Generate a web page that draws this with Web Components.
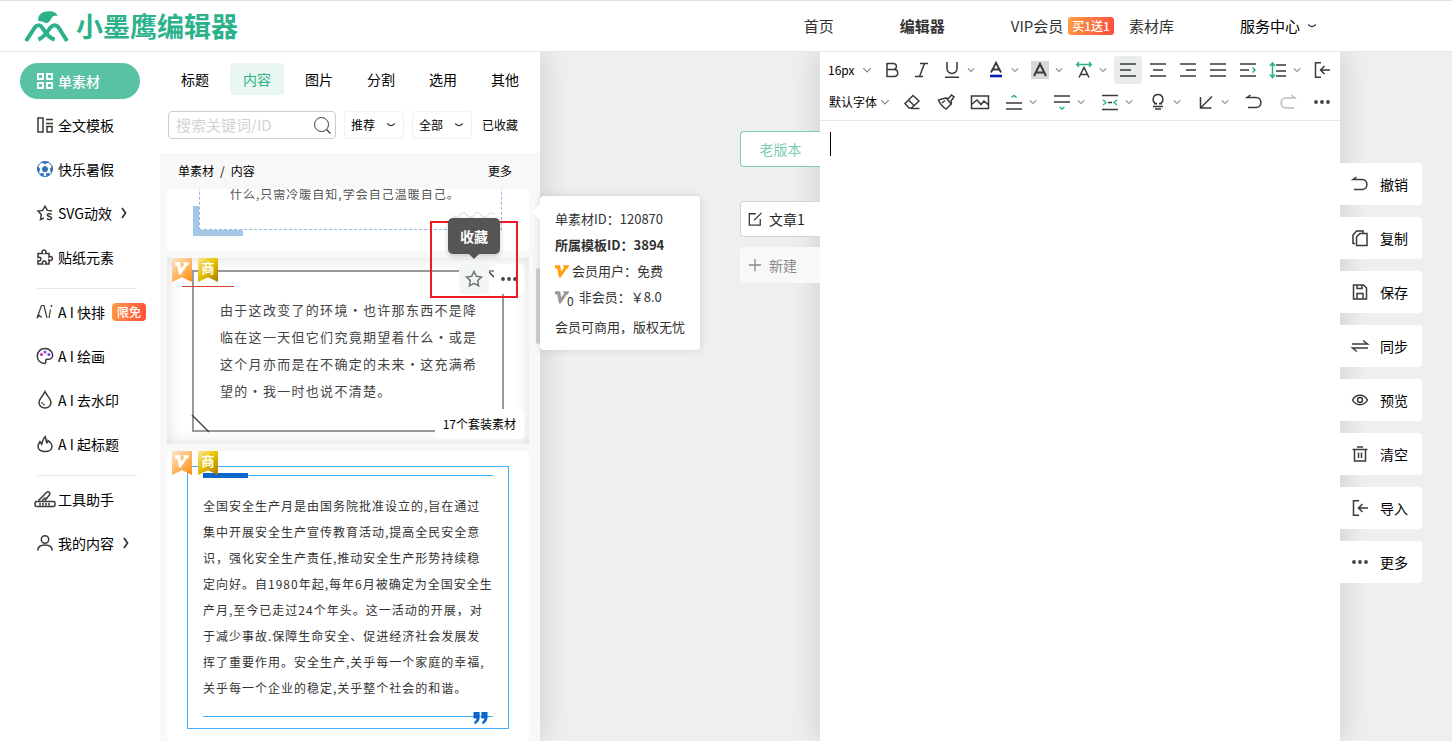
<!DOCTYPE html>
<html lang="zh-CN">
<head>
<meta charset="utf-8">
<title>小墨鹰编辑器</title>
<style>
body{margin:0;font-family:"Noto Sans CJK SC","Noto Sans",sans-serif;font-size:14px;line-height:20px;color:#000;background:#fff}
</style>
</head>
<body>
<ink-app></ink-app>
<script>
const ICONS = {
  grid:'<path d="M1 1h5v5H1zM10 1h5v5h-5zM1 10h5v5H1zM10 10h5v5h-5z" stroke-width="1.800"/>',
  layout:'<path d="M1 1h5v14H1zM9 2.500h7M9 6.500h7M10 9.500h5V15h-5z"/>',
  ball:'<circle cx="8" cy="8" r="7.500" fill="#fff" stroke="#2f6db5" stroke-width="1"/><path d="M8 5l3 2.200-1.200 3.600H6.200L5 7.200zM4.500 1h7L8 3zM.6 5.500L2.800 7.500 2.200 11 .8 9.500zM15.400 5.500l-2.200 2 .6 3.500 1.400-1.500zM4 12l3 1-1 2.300-2.500-1.200zM12 12l-3 1 1 2.300 2.500-1.200z" fill="#2f6db5" stroke="#2f6db5" stroke-width=".6"/>',
  starS:'<path d="M15 6l-4.600-.6L8 1.200 5.600 5.400 1 6l3.300 3.500-.8 5L7 13"/><path d="M14.500 9.300c-1.500-1-4.300-.7-4.200.8.100 1.800 4.300 1 4.300 2.900 0 1.600-3 2-4.600.7"/>',
  puzzle:'<path d="M1 4.500h4.600C4.500 2.800 5.200 1 7 1s2.500 1.800 1.400 3.500H12v3.600c1.700-1.100 3.500-.4 3.500 1.400s-1.800 2.500-3.500 1.400V15H8.600c.9-1.700.2-3-1.400-3S5 13.300 5.800 15H1v-3.400c1.700.8 3-.1 3-1.500S2.700 7.700 1 8.600z"/>',
  ai:'<path d="M0 14L4.500 1.500H7L10 14M1.500 11l3.500 2.500M0 14l3-3M13.500 5.500L12 14" stroke-width="1.200"/><circle cx="14.500" cy="2" r=".9" fill="#333" stroke="none"/>',
  palette:'<path d="M8 15.500C3 15.500.3 12.200.3 8 .3 3.500 3.700.6 8 .6s7.700 3 7.700 6.700c0 3-2.200 4.200-5.200 4-2.300-.1-1.700 1.500-1.700 2.800 0 .8-.2 1.400-.8 1.400z"/><g stroke="none"><circle cx="4.500" cy="6.500" r="1.500" fill="#d6249f"/><circle cx="8" cy="4" r="1.500" fill="#9a3be8"/><circle cx="11.800" cy="6.500" r="1.500" fill="#7c3aed"/></g>',
  drop:'<path d="M8 -.5C6 4 2 7 2 10.700 2 13.600 4.700 16 8 16s6-2.400 6-5.300C14 7 10 4 8 -.5z"/><path d="M5 10c.3 1.800 1.400 2.600 3 2.800" stroke-dasharray="1.500 1"/>',
  fire:'<path d="M8 15.500c-4 0-7-2-7-5.200 0-2.200 1.300-3.300 2-4.600.8 1 1.200 1.900 1.700 2.600C5.700 6.500 5 3 8.300.6c.6 2 .4 4.300 1.700 6.200.7-.5 1-1.300 1-2.300 2 1.500 4 3.500 4 6 0 3-3 5-7 5z"/>',
  knife:'<path d="M1.500 9.500L9.500 1.500c2-1.700 4.500.5 3 2.300L8 9.500M-.5 10.500h17c2 0 2 5 0 5h-17c-2 0-2-5 0-5zM3 12v2.500M6 12v2.500M9 12v2.500M12 12v2.500M5 9.500l3.500-3"/>',
  user:'<circle cx="8" cy="4.500" r="3.700"/><path d="M.8 15.500c0-4 3-5.500 7.200-5.500s7.200 1.500 7.200 5.500"/>',
  search:'<circle cx="7.500" cy="7.500" r="7" stroke-width="1"/><path d="M12.500 12.500l4 4" stroke-width="1.300"/>',
  down:'<path d="M3 6Q8 11.500 13 6"/>',
  tdown:'<path d="M3 5.500l5 5 5-5" stroke="#888" stroke-width="1.800"/>',
  right:'<path d="M5 3l3.500 5L5 13" stroke-width="1.800"/>',
  star:'<path d="M8 .5l2.300 4.700 5.200.8-3.800 3.600.9 5.200L8 12.300l-4.600 2.500.9-5.200L.5 6l5.200-.8z" stroke="#777"/>',
  dots:'<g fill="#444" stroke="none"><circle cx="2" cy="8" r="1.900"/><circle cx="8" cy="8" r="1.900"/><circle cx="14" cy="8" r="1.900"/></g>',
  vip:'<path d="M0 1.500h6l1 7L10.500 4 9 1.500h7L15 5h-1.500L6.500 15.500H4.500L2.500 5H0z" fill="currentColor" stroke="none"/>',
  bold:'<path d="M3 1.500h6c4.500 0 4.500 6 0 6H3zM3 7.500h7c5 0 5 7 0 7H3z"/>',
  italic:'<path d="M6 1.500h8M1 14.500h8M10.500 1.500l-5 13"/>',
  under:'<path d="M3 0v6.500C3 13 13 13 13 6.500V0M1 15.200h14"/>',
  color:'<path d="M3 10.500L8 .8l5 9.700M5 7.500h6" stroke-width="1.800"/><path d="M2 14h12" stroke="#0b22b0" stroke-width="2.600"/>',
  hilite:'<path d="M-1-1h18v18H-1z" fill="#d8d8d8" stroke="none"/><path d="M2 14L8 2l6 12M4 10.500h8" stroke-width="2"/>',
  spacing:'<path d="M3 15.500L8 5.500l5 10M5 12.500h6"/><path d="M3 0L.8 2.500 3 5M13 0l2.200 2.500L13 5M1 2.500h4M11 2.500h4M5 2.500h6" stroke="#2bb28b"/>',
  left:'<path d="M0 2h16M0 8h11M0 14h16"/>',
  center:'<path d="M0 2h16M3 8h10M0 14h16"/>',
  alignR:'<path d="M0 2h16M6 8h10M0 14h16"/>',
  justify:'<path d="M0 2h16M0 8h16M0 14h16"/>',
  indent:'<path d="M0 2h16M0 8h9M0 14h16"/><path d="M12.500 5.500L15 8l-2.500 2.500" stroke="#2bb28b"/>',
  lineh:'<path d="M6 3h10M6 9h10M6 14h10"/><path d="M0 4l2.500-3L5 4M0 12.500l2.500 3 2.500-3M2.500 1v14" stroke="#2bb28b"/>',
  enter:'<path d="M7 .8H1.500v14.400H7M16 8H6.500M10.500 4l-4 4 4 4"/>',
  eraser:'<path d="M5 14L1 9.500l8-8 6 5.500-7.500 7zM4.500 6l5.500 5.500M7 14.500h8.500"/>',
  brush:'<path d="M.5 6l7-2 3 .5 3-3.500L16 3l-3 4 .3 3L8 15C5 13 2 10 .5 6zM4 9l3-2.500M8 4l5.300 6"/>',
  image:'<path d="M-.5 2h17v12.500h-17zM-.5 10.500L5 6l4 4.500L12 7l4.500 4"/>',
  lineUp:'<path d="M0 9h16M0 15h16"/><path d="M5.500 3.500L8 1.500l2.500 2" stroke="#2bb28b"/>',
  lineDown:'<path d="M0 2h16M0 8h16"/><path d="M5.500 13L8 15l2.500-2" stroke="#2bb28b"/>',
  sides:'<path d="M0 1.500h16M0 15.500h16M6 8.500h4"/><path d="M1 6l3 2.500L1 11M15 6l-3 2.500L15 11" stroke="#2bb28b"/>',
  bulb:'<path d="M7 9.800H4M9 9.800h3M7 9.800C1 8.500 2.500.5 8 .5s7 8 1 9.300M3 12.500h10M5 15h6"/>',
  diag:'<path d="M2.500 3v11h11M2.500 14L14 2.500"/>',
  undo:'<path d="M4.500 1L1 3.500h9c6.500 0 6.500 10 0 10H2"/>',
  redo:'<path d="M11.500 1L15 4H6C-.5 4-.5 14 6 14h8" stroke="#bbb"/>',
  copy:'<path d="M3 13.500H1V5l3.500-4H11v2"/><path d="M4.500 7L8 3.500h7v12H4.500z"/>',
  save:'<path d="M1.500 1h10l3 3v11h-13zM5 1v3.500h5V1M5 15V9.500h6V15"/>',
  sync:'<path d="M0 6h15.500L11 2.500M16 10H.5L5 13.500"/>',
  eye:'<path d="M.5 8C4 1.800 12 1.800 15.500 8 12 14.200 4 14.200.5 8z"/><circle cx="8" cy="8" r="2.500"/>',
  trash:'<path d="M.5 3.500h15M5 1h6M2.500 3.500V15h11V3.500M6.500 6.500V12M9.500 6.500V12"/>',
  edit:'<path d="M9 2H1.500v13H14V8M7 9.500L15.500 1"/>',
  plus:'<path d="M8 1v14M1 8h14"/>',
  logo:'<g fill="#2bb28b" stroke="none"><path d="M43 30C40 12 55 0 75 1c14 0 24 6 25 14-8-2-14 0-17 6-3 8-9 13-15 16-8-4-16-7-25-7z"/></g><g stroke="#2bb28b" stroke-width="12" fill="none"><path d="M6 90l26-40c6-9 16-9 22-1 12 17 18 31 38 37"/><path d="M129 90l-25-40c-8-11-18-8-25 0-8 12-18 28-36 36"/></g>',
  quote:'<path d="M0 1h7v6c0 4-2.500 7-6 8v-3c1.500-.8 2.500-2 2.500-3.500H0zM9 1h7v6c0 4-2.500 7-6 8v-3c1.500-.8 2.500-2 2.500-3.500H9z" fill="#0b66cc" stroke="none"/>',
  wave:'<path d="M0 2q3.500 5 7 0t7 0 7 0 7 0 7 0 7 0" stroke="#bfe0d2" stroke-width="1"/>',
  corner:'<path d="M0 0l17 17" stroke="#444"/>'
};
const BOX = {logo:'0 0 135 90', wave:'0 0 44 5', corner:'0 0 17 17'};

function define(name, css, html) {
  const t = document.createElement('template');
  customElements.define(name, class extends HTMLElement {
    constructor() { super(); this.attachShadow({mode:'open'}); }
    connectedCallback() {
      t.innerHTML = '<style>*{box-sizing:border-box}button,select,input,textarea{font:inherit;color:inherit;border:0;background:none;padding:0;margin:0;outline:0}a{color:inherit;text-decoration:none}' + css + '</style>' +
        (typeof html === 'function' ? html(this) : html);
      this.shadowRoot.replaceChildren(t.content.cloneNode(true));
    }
  });
}

define('ink-icon', ':host{display:block;flex:none;width:16px;height:16px}svg{display:block;width:100%;height:100%;overflow:visible}',
  el => { const n = el.getAttribute('name');
    return `<svg viewBox="${BOX[n]||'0 0 16 16'}" fill="none" stroke="${el.hasAttribute('tint')?'currentColor':'#3a3a3a'}" stroke-width="1.500" aria-hidden="true">${ICONS[n]}</svg>`; });

define('ink-badge', ':host{display:block;flex:none;color:#fff;background:linear-gradient(110deg,#ffa044,#ff4a3c);border-radius:3px;height:18px;line-height:18px;font-size:12px;font-weight:500;padding:0 var(--pad,4px)}', '<slot></slot>');

define('ink-header', `
:host{display:flex;align-items:center;justify-content:space-between;height:52px;box-sizing:border-box;border-top:1px solid #e0e0e0;border-bottom:1px solid #e6e6e6;background:#fff;padding:0 134px 0 24px;font-size:15px;line-height:22px;color:#333}
.brand{display:flex;align-items:center;gap:7px;color:#2bb28b;font-size:27px;line-height:36px;font-weight:700}
.brand ink-icon{width:45px;height:30px}
nav{display:flex;align-items:center}
nav a{display:flex;align-items:center;gap:5px;white-space:nowrap}
.a{margin-right:66px}.b{margin-right:66px;font-weight:700}.c{margin-right:15px}.d{margin-right:66px}.e{color:#000}
.e ink-icon{width:12px;height:12px;margin-left:1px}`,
`<a class="brand" href="#"><ink-icon name="logo"></ink-icon><span>小墨鹰编辑器</span></a>
<nav><a class="a" href="#">首页</a><a class="b" href="#">编辑器</a><a class="c" href="#">VIP会员<ink-badge>买1送1</ink-badge></a><a class="d" href="#">素材库</a><a class="e" href="#">服务中心<ink-icon name="down"></ink-icon></a></nav>`);

define('ink-nav-item', `
:host{display:flex;align-items:center;height:44px;padding:0 20px}
a{display:flex;align-items:center;gap:5px;width:120px;height:36px;padding-left:17px;border-radius:18px;white-space:nowrap}
:host([active]) a{background:#5ac2a4;color:#fff;font-weight:500}`,
el => `<a href="#"><ink-icon name="${el.getAttribute('icon')}" ${el.hasAttribute('active')?'tint':''}></ink-icon><slot></slot>${el.hasAttribute('more')?'<ink-icon name="right"></ink-icon>':''}</a>`);

define('ink-nav', `
:host{display:block;flex:none;width:160px;padding-top:7px;box-sizing:border-box;background:#fff}
hr{border:0;height:1px;background:#e4e8e7;margin:9px 23px 1px 37px}
ink-badge{border-radius:4px;margin-left:2px;--pad:5px}`,
`<nav><ink-nav-item active icon="grid">单素材</ink-nav-item><ink-nav-item icon="layout">全文模板</ink-nav-item><ink-nav-item icon="ball">快乐暑假</ink-nav-item><ink-nav-item icon="starS" more>SVG动效</ink-nav-item><ink-nav-item icon="puzzle">贴纸元素</ink-nav-item><hr>
<ink-nav-item icon="ai">A I 快排<ink-badge>限免</ink-badge></ink-nav-item><ink-nav-item icon="palette">A I 绘画</ink-nav-item><ink-nav-item icon="drop">A I 去水印</ink-nav-item><ink-nav-item icon="fire">A I 起标题</ink-nav-item><hr>
<ink-nav-item icon="knife">工具助手</ink-nav-item><ink-nav-item icon="user" more>我的内容</ink-nav-item></nav>`);

define('ink-select', `
:host{display:block;flex:none;position:relative;width:60px;height:28px}
select{appearance:none;width:100%;height:100%}
ink-icon{position:absolute;right:4px;top:50%;margin-top:-6px;width:12px;height:12px;pointer-events:none}
:host([boxed]) ink-icon{right:7px}
:host([boxed]) select{border:1px solid #f1f1f1;border-radius:4px;padding-left:6px}`,
el => `<select aria-label="${el.getAttribute('label')}"><option>${el.getAttribute('value')}</option></select><ink-icon name="${el.hasAttribute('boxed')?'down':'tdown'}"></ink-icon>`);

define('ink-ribbons', `
:host{position:absolute;left:5px;top:0;display:flex;gap:6px;color:#fff}
span{display:flex;justify-content:center;width:20px;height:24px;padding-top:3px;box-sizing:border-box;clip-path:polygon(0 0,100% 0,100% 100%,50% 80%,0 100%);font-size:13px;line-height:14px;font-weight:700}
.v{background:linear-gradient(135deg,#fde6c8,#ff8c0c)}.s{background:linear-gradient(135deg,#fbe69a,#e8c400 45%,#a87800)}
ink-icon{width:14px;height:14px}`,
'<span class="v"><ink-icon name="vip"></ink-icon></span><span class="s">商</span>');

define('ink-card', `
:host{display:block;flex:none;position:relative;background:#fff;font-size:12px}`, '<slot></slot>');

define('ink-popover', `
:host{display:flex;flex-direction:column;position:absolute;box-sizing:border-box;width:160px;height:154px;padding:10px 0 0 15px;background:#fff;border-radius:4px;box-shadow:0 0 8px rgba(0,0,0,.12);font-size:13px;line-height:26px;color:#333;white-space:nowrap}
:host::before{content:"";position:absolute;left:-8px;top:8px;border:8px solid transparent;border-left:0;border-right-color:#fff}
div{display:flex;align-items:center;height:26px;gap:3px}
b{font-weight:700}ink-icon{width:14px;height:14px}
.o{color:#ff9f0a}.g{color:#999}sub{font-size:12px;line-height:12px;margin:8px 2px 0 -5px}p{margin:4px 0 0}`,
`<div>单素材ID：120870</div><div><b>所属模板ID：3894</b></div><div><ink-icon class="o" name="vip"></ink-icon>会员用户：免费</div><div><ink-icon class="g" name="vip"></ink-icon><sub>0</sub>非会员：￥8.0</div><p>会员可商用，版权无忧</p>`);

define('ink-library', `
:host{display:flex;flex-direction:column;flex:none;width:380px;position:relative;z-index:3;background:#fff;box-shadow:0 0 30px rgba(0,0,0,.16);clip-path:inset(0 -200px 0 0)}
.tabs{display:flex;gap:8px;padding:11px 8px 0}
.tabs button{width:54px;height:32px;border-radius:4px}
.tabs .on{background:#eaf6f2;color:#2bb28b}
.filters{display:flex;align-items:center;gap:8px;padding:16px 8px 14px;font-size:12px}
label{display:flex;align-items:center;width:168px;height:28px;border:1px solid #ccc;border-radius:4px;padding:0 5px 0 7px}
input{flex:1;min-width:0;font-size:15px}input::placeholder{color:#d3d3d3;opacity:1}
.saved{margin-left:2px}
.crumb{display:flex;justify-content:space-between;align-items:center;height:36px;padding:0 28px 0 18px;background:#f8f8f8;font-size:12px}
.crumb i{font-style:normal;margin:0 6px}
.list{flex:1;min-height:0;overflow:hidden;display:flex;flex-direction:column;gap:7px;background:#f8f8f8;padding:0 11px 0 7px;position:relative}
.one{display:flex;flex-direction:column;justify-content:flex-end;height:62px;overflow:hidden}
.dash{position:relative;margin:0 27px 21px 32px;border:1px dashed #8fb9e6;border-top:0;padding:80px 0 22px 30px;color:#555;letter-spacing:1px;line-height:26px;white-space:nowrap}
.dash::before{content:"";position:absolute;left:-7px;bottom:-7px;width:50px;height:30px;border:solid #a6c6e6;border-width:0 0 6px 6px;box-sizing:border-box}
.dash ink-icon{position:absolute;right:4px;bottom:11px;width:44px;height:5px}
.two{box-shadow:inset 0 0 16px rgba(0,0,0,.14);padding:12px 25px}
.frame{position:relative;border:2px solid #999;padding:24px 0 26px 26px;font-size:13px;letter-spacing:.1em;line-height:27px;color:#444;white-space:nowrap}
.frame ink-icon{position:absolute;width:17px;height:17px;left:-2px;bottom:-2px}
.frame ink-icon.tr{left:auto;right:-2px;bottom:auto;top:-2px}
.red{position:absolute;left:15px;top:28px;width:52px;height:1px;background:#d2452b}
.act{position:absolute;top:6px;width:30px;height:30px;border-radius:4px;background:#fff;display:flex;align-items:center;justify-content:center}
.fav{right:40px;background:#f2f6f5}.more{right:5px}
.tip{position:absolute;z-index:2;right:29px;top:-40px;width:52px;height:36px;border-radius:5px;background:#555;color:#fff;font-size:14px;font-weight:700;line-height:36px;text-align:center;box-shadow:0 2px 5px rgba(0,0,0,.2)}
.tip::after{content:"";position:absolute;left:21px;top:36px;border:5px solid transparent;border-bottom:0;border-top-color:#555}
.set{position:absolute;right:5px;bottom:5px;height:30px;line-height:30px;padding:0 8px;border-radius:4px;background:#fff;font-size:12px}
.three{padding:15px 20px}
.blue{border:1px solid #3eb0ff;padding:8px 15px 11px;color:#333;letter-spacing:1px;line-height:26px;white-space:nowrap}
.blue p{margin:17px 0 15px}
.rule{position:relative;height:1px;background:#3eb0ff}
.rule::before{content:"";position:absolute;left:0;top:-2px;width:45px;height:5px;background:#0b66cc}
.rule.end::before{content:none}.rule ink-icon{position:absolute;right:5px;top:-5px;width:15px;height:14px}
.thumb{position:absolute;right:0;top:216px;width:4px;height:76px;border-radius:2px;background:#d0d0d0}
.mark{position:absolute;left:270px;top:169px;width:88px;height:77px;border:2px solid #ed1c24;pointer-events:none}
ink-popover{left:380px;top:144px}`,
`<div class="tabs" role="tablist"><button>标题</button><button class="on">内容</button><button>图片</button><button>分割</button><button>选用</button><button>其他</button></div>
<div class="filters"><label><input aria-label="搜索" placeholder="搜索关键词/ID"><ink-icon name="search"></ink-icon></label><ink-select boxed label="排序" value="推荐"></ink-select><ink-select boxed label="范围" value="全部"></ink-select><button class="saved">已收藏</button></div>
<div class="crumb"><span>单素材<i>/</i>内容</span><a href="#">更多</a></div>
<div class="list">
<ink-card class="one"><div class="dash">什么,只需冷暖自知,学会自己温暖自己。<ink-icon name="wave"></ink-icon></div></ink-card>
<ink-card class="two"><div class="frame">由于这改变了的环境・也许那东西不是降<br>临在这一天但它们究竟期望着什么・或是<br>这个月亦而是在不确定的未来・这充满希<br>望的・我一时也说不清楚。<ink-icon name="corner"></ink-icon><ink-icon class="tr" name="corner"></ink-icon></div><div class="red"></div><ink-ribbons></ink-ribbons>
<button class="act fav" aria-label="收藏"><ink-icon name="star"></ink-icon></button><button class="act more" aria-label="更多"><ink-icon name="dots"></ink-icon></button><div class="tip">收藏</div><button class="set">17个套装素材</button></ink-card>
<ink-card class="three"><div class="blue"><div class="rule"></div><p>全国安全生产月是由国务院批准设立的,旨在通过<br>集中开展安全生产宣传教育活动,提高全民安全意<br>识，强化安全生产责任,推动安全生产形势持续稳<br>定向好。自1980年起,每年6月被确定为全国安全生<br>产月,至今已走过24个年头。这一活动的开展，对<br>于减少事故.保障生命安全、促进经济社会发展发<br>挥了重要作用。安全生产,关乎每一个家庭的幸福,<br>关乎每一个企业的稳定,关乎整个社会的和谐。</p><div class="rule end"><ink-icon name="quote"></ink-icon></div></div><ink-ribbons></ink-ribbons></ink-card>
</div><div class="thumb"></div><div class="mark"></div><ink-popover></ink-popover>`);

define('ink-docs', `
:host{display:flex;flex-direction:column;align-items:flex-end;flex:1;min-width:80px;padding-top:79px;position:relative;z-index:2}
button{display:flex;align-items:center;gap:7px;width:80px;height:36px;padding-left:7px;border-radius:4px 0 0 4px;background:#fff;border:1px solid #d4d4d4;border-right:0;color:#222;margin-bottom:10px;white-space:nowrap}
.old{justify-content:center;padding:0;border-color:#7ccdb4;color:#7ccdb4;margin-bottom:34px}
.new{background:#f8f8f8;border-color:#f8f8f8;color:#888}
ink-icon{width:14px;height:14px}`,
`<button class="old">老版本</button><button><ink-icon name="edit"></ink-icon>文章1</button><button class="new"><ink-icon name="plus" tint></ink-icon>新建</button>`);

define('ink-tool', `
:host{display:block;flex:none}
button{display:flex;align-items:center;width:var(--w,30px);height:28px;justify-content:center;position:relative}
:host([drop]) button{width:calc(var(--w,30px) + 14px);justify-content:flex-start;padding-left:calc(var(--w,30px) / 2 - 8px)}
:host([on]) button{background:#e8edeb;border-radius:4px;width:28px;margin:0 1px}
.c{width:10px;height:10px;margin-left:6px}`,
el => `<button aria-label="${el.getAttribute('icon')}"><ink-icon name="${el.getAttribute('icon')}"></ink-icon>${el.hasAttribute('drop')?'<ink-icon class="c" name="tdown"></ink-icon>':''}</button>`);

define('ink-editor', `
:host{display:flex;flex-direction:column;flex:none;width:520px;background:#fff;box-shadow:0 0 30px rgba(0,0,0,.16);position:relative;z-index:1}
.bar{border-bottom:1px solid #e6ecea;padding:4px 0}
.row{display:flex;align-items:center;height:28px;padding-left:8px;margin-bottom:4px}
.row:last-child{--w:34px;padding-left:9px;margin:0}
.size{width:49px;font-size:12px}.face{width:66px;font-size:12px}
.page{position:relative;flex:1;display:flex}
textarea{flex:1;resize:none;padding:10px;font-size:16px;line-height:26px}
.caret{position:absolute;left:10px;top:11px;width:1px;height:24px;background:#000}`,
()=>{ const t=(n,a='')=>`<ink-tool icon="${n}" ${a}></ink-tool>`;
return `<div class="bar"><div class="row"><ink-select class="size" label="字号" value="16px"></ink-select>${t('bold')+t('italic')+t('under','drop')+t('color','drop')+t('hilite','drop')+t('spacing','drop')+t('left','on')+t('center')+t('alignR')+t('justify')+t('indent')+t('lineh','drop')+t('enter')}</div>
<div class="row"><ink-select class="face" label="字体" value="默认字体"></ink-select>${t('eraser')+t('brush')+t('image')+t('lineUp','drop')+t('lineDown','drop')+t('sides','drop')+t('bulb','drop')+t('diag','drop')+t('undo')+t('redo')+t('dots')}</div></div>
<div class="page"><textarea aria-label="正文"></textarea><span class="caret"></span></div>`; });

define('ink-actions', `
:host{display:flex;flex-direction:column;gap:12px;flex:none;width:112px;padding-top:111px;position:relative;z-index:2}
button{display:flex;align-items:center;gap:12px;width:82px;height:42px;padding-left:12px;background:#fff;border-radius:0 4px 4px 0;white-space:nowrap}`,
()=>[['undo','撤销'],['copy','复制'],['save','保存'],['sync','同步'],['eye','预览'],['trash','清空'],['enter','导入'],['dots','更多']].map(([i,s])=>`<button><ink-icon name="${i}"></ink-icon>${s}</button>`).join(''));

define('ink-app', `
:host{display:flex;flex-direction:column;height:100vh;overflow:hidden}
main{display:flex;flex:1;min-height:0;background:#efefef;overflow:hidden}
ink-header{flex:none}`,
`<ink-header></ink-header><main><ink-nav></ink-nav><ink-library></ink-library><ink-docs></ink-docs><ink-editor></ink-editor><ink-actions></ink-actions></main>`);
</script>
</body>
</html>
